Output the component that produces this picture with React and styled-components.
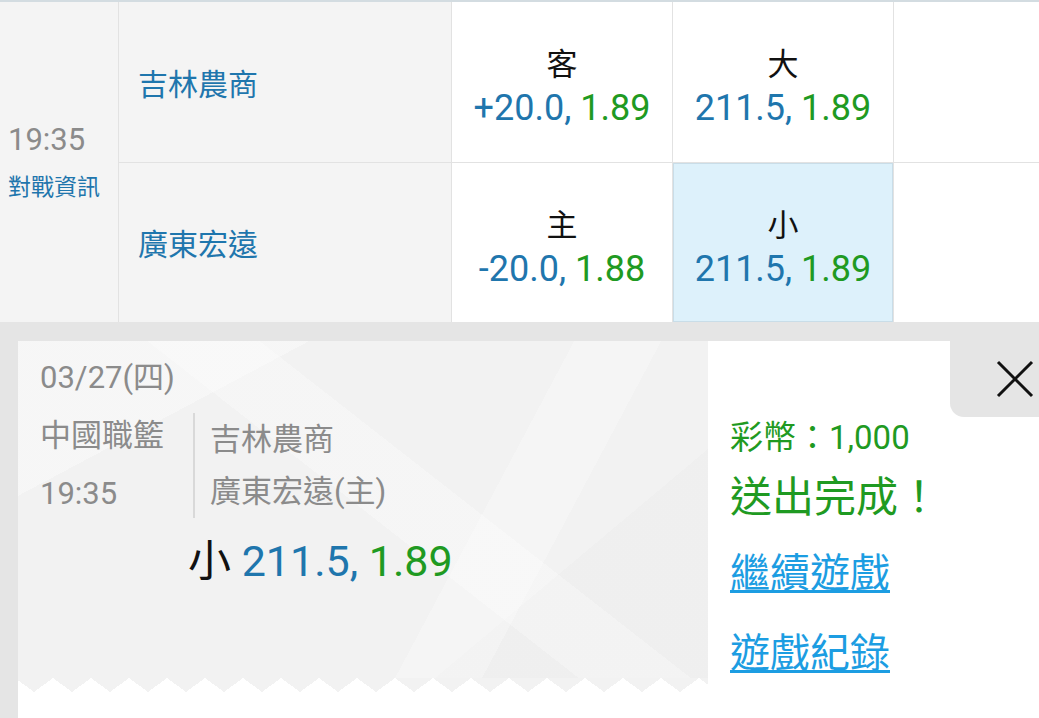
import React from 'react';
import styled, { createGlobalStyle } from 'styled-components';

const Global = createGlobalStyle`
  html, body { margin: 0; padding: 0; background: #fff; }
  body {
    font-family: Roboto, "Noto Sans CJK TC", sans-serif;
    width: 1039px;
    height: 718px;
    overflow: hidden;
  }
  * { box-sizing: border-box; }
`;

const BLUE = '#1f76ad';
const GREEN = '#1f9a22';
const GREY = '#8b8b8b';

const Page = styled.div`
  width: 1039px;
  height: 718px;
  display: flex;
  flex-direction: column;
  overflow: hidden;
`;

const Table = styled.div`
  display: grid;
  grid-template-columns: 118px 332px 220px 220px 1fr;
  grid-template-rows: 160px 159px;
  gap: 1px;
  background: #e2e2e2;
  border-top: 2px solid #d3dce1;
  flex: none;
`;

const TimeCell = styled.div`
  grid-row: span 2;
  background: #f4f4f4;
  display: flex;
  flex-direction: column;
  justify-content: center;
  padding-left: 8px;
`;

const TimeText = styled.div`
  font-size: 31px;
  line-height: 40px;
  color: ${GREY};
`;

const InfoLink = styled.div`
  font-size: 23px;
  line-height: 32px;
  margin-top: 12px;
  color: ${BLUE};
`;

const TeamCell = styled.div`
  background: #f4f4f4;
  display: flex;
  align-items: center;
  padding: 5px 0 0 19px;
  font-size: 30px;
  line-height: 40px;
  color: ${BLUE};
`;

const OddsCell = styled.div`
  background: ${(p) => (p.$selected ? '#ddf1fb' : '#fff')};
  box-shadow: ${(p) => (p.$selected ? 'inset 0 0 0 1px #c9dde8' : 'none')};
  display: flex;
  flex-direction: column;
  align-items: center;
  justify-content: center;
  padding-top: 10px;
`;

const OddsLabel = styled.div`
  font-size: 31px;
  line-height: 42px;
  color: #111;
`;

const OddsValue = styled.div`
  font-size: 36px;
  line-height: 44px;
  white-space: nowrap;
`;

const Blue = styled.span`
  color: ${BLUE};
`;

const Green = styled.span`
  color: ${GREEN};
`;

const Black = styled.span`
  color: #111;
`;

const EmptyCell = styled.div`
  background: #fff;
`;

const Bottom = styled.div`
  flex: 1;
  background: #e5e5e5;
  padding: 19px 0 0 18px;
  display: flex;
`;

const Card = styled.div`
  flex: 1;
  background: #fff;
  display: flex;
  align-items: flex-start;
  position: relative;
`;

const Ticket = styled.div`
  width: 690px;
  height: 351px;
  display: flex;
  flex-direction: column;
  flex: none;
`;

const TicketBody = styled.div`
  flex: 1;
  padding: 17px 0 0 22px;
  background-color: #f2f2f2;
  background-image:
    linear-gradient(152deg, rgba(255, 255, 255, 0.35) 0 22%, transparent 22%),
    linear-gradient(38deg, transparent 0 50%, rgba(255, 255, 255, 0.28) 50% 60%, transparent 60%),
    linear-gradient(118deg, transparent 0 64%, rgba(255, 255, 255, 0.25) 64% 74%, transparent 74%),
    linear-gradient(320deg, rgba(0, 0, 0, 0.012) 0 25%, transparent 25%);
`;

const Zigzag = styled.div`
  height: 14px;
  background-color: #fff;
  background-image:
    linear-gradient(to bottom right, #f2f2f2 50%, transparent 50%),
    linear-gradient(to bottom left, #f2f2f2 50%, transparent 50%);
  background-size: 38px 28px;
  background-position: 16px 100%;
  background-repeat: repeat-x;
`;

const DateLine = styled.div`
  font-size: 31px;
  line-height: 40px;
  color: ${GREY};
`;

const DetailRow = styled.div`
  display: flex;
  align-items: flex-start;
  margin-top: 15px;
`;

const LeagueCol = styled.div`
  width: 153px;
  font-size: 31px;
  line-height: 58px;
  color: ${GREY};
  margin-top: -6px;
`;

const TeamsCol = styled.div`
  border-left: 2px solid #d9d9d9;
  padding: 1px 0 0 15px;
  font-size: 31px;
  line-height: 52px;
  color: ${GREY};
`;

const BetLine = styled.div`
  margin: 10px 0 0 148px;
  font-size: 43px;
  line-height: 56px;
  white-space: nowrap;
`;

const Info = styled.div`
  flex: 1;
  padding: 75px 0 0 22px;
  display: flex;
  flex-direction: column;
  align-items: flex-start;
`;

const Coins = styled.div`
  font-size: 33px;
  line-height: 44px;
  color: ${GREEN};
`;

const Done = styled.div`
  font-size: 42px;
  line-height: 56px;
  margin-top: 10px;
  color: ${GREEN};
`;

const ActionLink = styled.a`
  font-size: 40px;
  line-height: 56px;
  margin-top: ${(p) => p.$gap}px;
  color: #1c9de2;
  text-decoration: underline;
  text-decoration-thickness: 3px;
  text-underline-offset: 3px;
  cursor: pointer;
`;

const CloseButton = styled.button`
  position: absolute;
  top: 0;
  right: 0;
  width: 89px;
  height: 76px;
  border: none;
  padding: 0;
  background: #e5e5e5;
  border-bottom-left-radius: 14px;
  display: flex;
  align-items: center;
  justify-content: center;
  padding-left: 40px;
  padding-top: 0;
`;

const CloseIcon = () => (
  <svg width="38" height="38" viewBox="0 0 38 38">
    <path d="M2 2 L36 36 M36 2 L2 36" stroke="#111" strokeWidth="3" fill="none" />
  </svg>
);

const Odds = ({ label, line, price, selected }) => (
  <OddsCell $selected={selected}>
    <OddsLabel>{label}</OddsLabel>
    <OddsValue>
      <Blue>{line}, </Blue>
      <Green>{price}</Green>
    </OddsValue>
  </OddsCell>
);

export default function App() {
  return (
    <Page>
      <Global />
      <Table>
        <TimeCell>
          <TimeText>19:35</TimeText>
          <InfoLink>對戰資訊</InfoLink>
        </TimeCell>
        <TeamCell>吉林農商</TeamCell>
        <Odds label="客" line="+20.0" price="1.89" />
        <Odds label="大" line="211.5" price="1.89" />
        <EmptyCell />
        <TeamCell>廣東宏遠</TeamCell>
        <Odds label="主" line="-20.0" price="1.88" />
        <Odds label="小" line="211.5" price="1.89" selected />
        <EmptyCell />
      </Table>
      <Bottom>
        <Card>
          <Ticket>
            <TicketBody>
              <DateLine>03/27(四)</DateLine>
              <DetailRow>
                <LeagueCol>
                  <div>中國職籃</div>
                  <div>19:35</div>
                </LeagueCol>
                <TeamsCol>
                  <div>吉林農商</div>
                  <div>廣東宏遠(主)</div>
                </TeamsCol>
              </DetailRow>
              <BetLine>
                <Black>小 </Black>
                <Blue>211.5, </Blue>
                <Green>1.89</Green>
              </BetLine>
            </TicketBody>
            <Zigzag />
          </Ticket>
          <Info>
            <Coins>彩幣：1,000</Coins>
            <Done>送出完成！</Done>
            <ActionLink $gap={20}>繼續遊戲</ActionLink>
            <ActionLink $gap={24}>遊戲紀錄</ActionLink>
          </Info>
          <CloseButton aria-label="close">
            <CloseIcon />
          </CloseButton>
        </Card>
      </Bottom>
    </Page>
  );
}
